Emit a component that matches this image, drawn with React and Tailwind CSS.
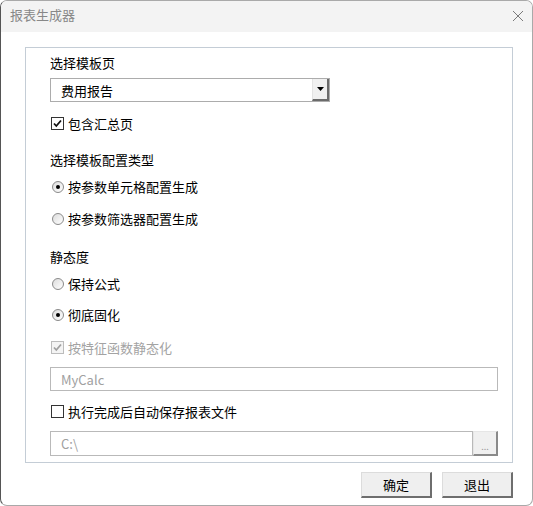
import React from "react";

const font = { fontFamily: '"Noto Sans CJK SC", "Liberation Sans", sans-serif' };

function CheckBox({ checked, disabled, label }) {
  return (
    <div className={`flex items-center h-[17px] ${disabled ? "text-[#a3a3a3]" : "text-black"}`}>
      <span
        className={`w-[13px] h-[13px] ml-[1px] border flex items-center justify-center ${
          disabled ? "border-[#bcbcbc] bg-[#f4f4f4]" : "border-[#333] bg-white"
        }`}
      >
        {checked && (
          <svg width="9" height="9" viewBox="0 0 9 9">
            <path d="M1 4.5 L3.3 7 L8 1.5" fill="none" stroke={disabled ? "#a0a0a0" : "#111"} strokeWidth="1.8" />
          </svg>
        )}
      </span>
      <span className="ml-[4px]">{label}</span>
    </div>
  );
}

function Radio({ checked, label }) {
  return (
    <div className="flex items-center h-[17px]">
      <span className="w-[12px] h-[12px] ml-[2px] rounded-full border border-[#8a8a8a] bg-gradient-to-br from-[#dcdcdc] to-white flex items-center justify-center">
        {checked && <span className="w-[4px] h-[4px] rounded-full bg-black" />}
      </span>
      <span className="ml-[4px]">{label}</span>
    </div>
  );
}

export default function App() {
  return (
    <div className="w-[533px] h-[506px] bg-white text-[13px] leading-[17px]" style={font}>
      <div className="w-full h-full border border-l-[#555] border-[#a9a9a9] rounded-[7px] overflow-hidden flex flex-col bg-white">
        {/* title bar */}
        <div className="h-[31px] bg-[#f3f3f3] flex items-center justify-between pl-[9px] pr-[8px] shrink-0">
          <span className="text-[#888] text-[13px] pb-[4px]">报表生成器</span>
          <svg width="12" height="12" viewBox="0 0 12 12" className="mb-[2px]">
            <path d="M1 1 L11 11 M11 1 L1 11" stroke="#7a7a7a" strokeWidth="1" />
          </svg>
        </div>

        {/* group box */}
        <div className="ml-[24px] mt-[15px] w-[488px] h-[416px] border border-[#c4cdd6] pl-[24px] pr-[14px] pt-[6px] flex flex-col">
          <div className="h-[17px]">选择模板页</div>
          <div className="mt-[7px] w-[280px] h-[24px] border border-[#acacac] flex items-center justify-between">
            <span className="pl-[10px]">费用报告</span>
            <span className="w-[17px] h-[22px] bg-[#f0f0f0] border-l border-[#e3e3e3] border-r-2 border-b-2 border-r-[#6b6b6b] border-b-[#6b6b6b] flex items-center justify-center">
              <svg width="7" height="4" viewBox="0 0 7 4">
                <path d="M0 0 H7 L3.5 4 Z" fill="#000" />
              </svg>
            </span>
          </div>
          <div className="mt-[13px]">
            <CheckBox checked label="包含汇总页" />
          </div>

          <div className="mt-[19px] h-[17px]">选择模板配置类型</div>
          <div className="mt-[10px]">
            <Radio checked label="按参数单元格配置生成" />
          </div>
          <div className="mt-[15px]">
            <Radio label="按参数筛选器配置生成" />
          </div>

          <div className="mt-[21px] h-[17px]">静态度</div>
          <div className="mt-[10px]">
            <Radio label="保持公式" />
          </div>
          <div className="mt-[14px]">
            <Radio checked label="彻底固化" />
          </div>
          <div className="mt-[16px]">
            <CheckBox checked disabled label="按特征函数静态化" />
          </div>

          <div className="mt-[11px] h-[24px] border border-[#b9b9b9] flex items-center pl-[10px] text-[#a0a0a0]">
            MyCalc
          </div>
          <div className="mt-[12px]">
            <CheckBox label="执行完成后自动保存报表文件" />
          </div>
          <div className="mt-[11px] h-[25px] flex">
            <div className="flex-1 border border-[#b9b9b9] flex items-center pl-[10px] text-[#a0a0a0]">C:\</div>
            <div className="w-[25px] bg-[#f0f0f0] border-t border-l border-[#e6e6e6] border-r-2 border-b-2 border-r-[#8a8a8a] border-b-[#8a8a8a] flex items-end justify-center pb-[3px] text-[9px] leading-[9px] text-[#9a9a9a]">
              ...
            </div>
          </div>
        </div>

        {/* buttons */}
        <div className="mt-[9px] flex justify-end gap-[10px] pr-[19px]">
          <button className="w-[71px] h-[26px] bg-[#efefef] border border-[#dcdcdc] border-r-2 border-b-2 border-r-[#6e6e6e] border-b-[#6e6e6e] text-[13px] text-black">
            确定
          </button>
          <button className="w-[71px] h-[26px] bg-[#efefef] border border-[#dcdcdc] border-r-2 border-b-2 border-r-[#6e6e6e] border-b-[#6e6e6e] text-[13px] text-black">
            退出
          </button>
        </div>
      </div>
    </div>
  );
}
